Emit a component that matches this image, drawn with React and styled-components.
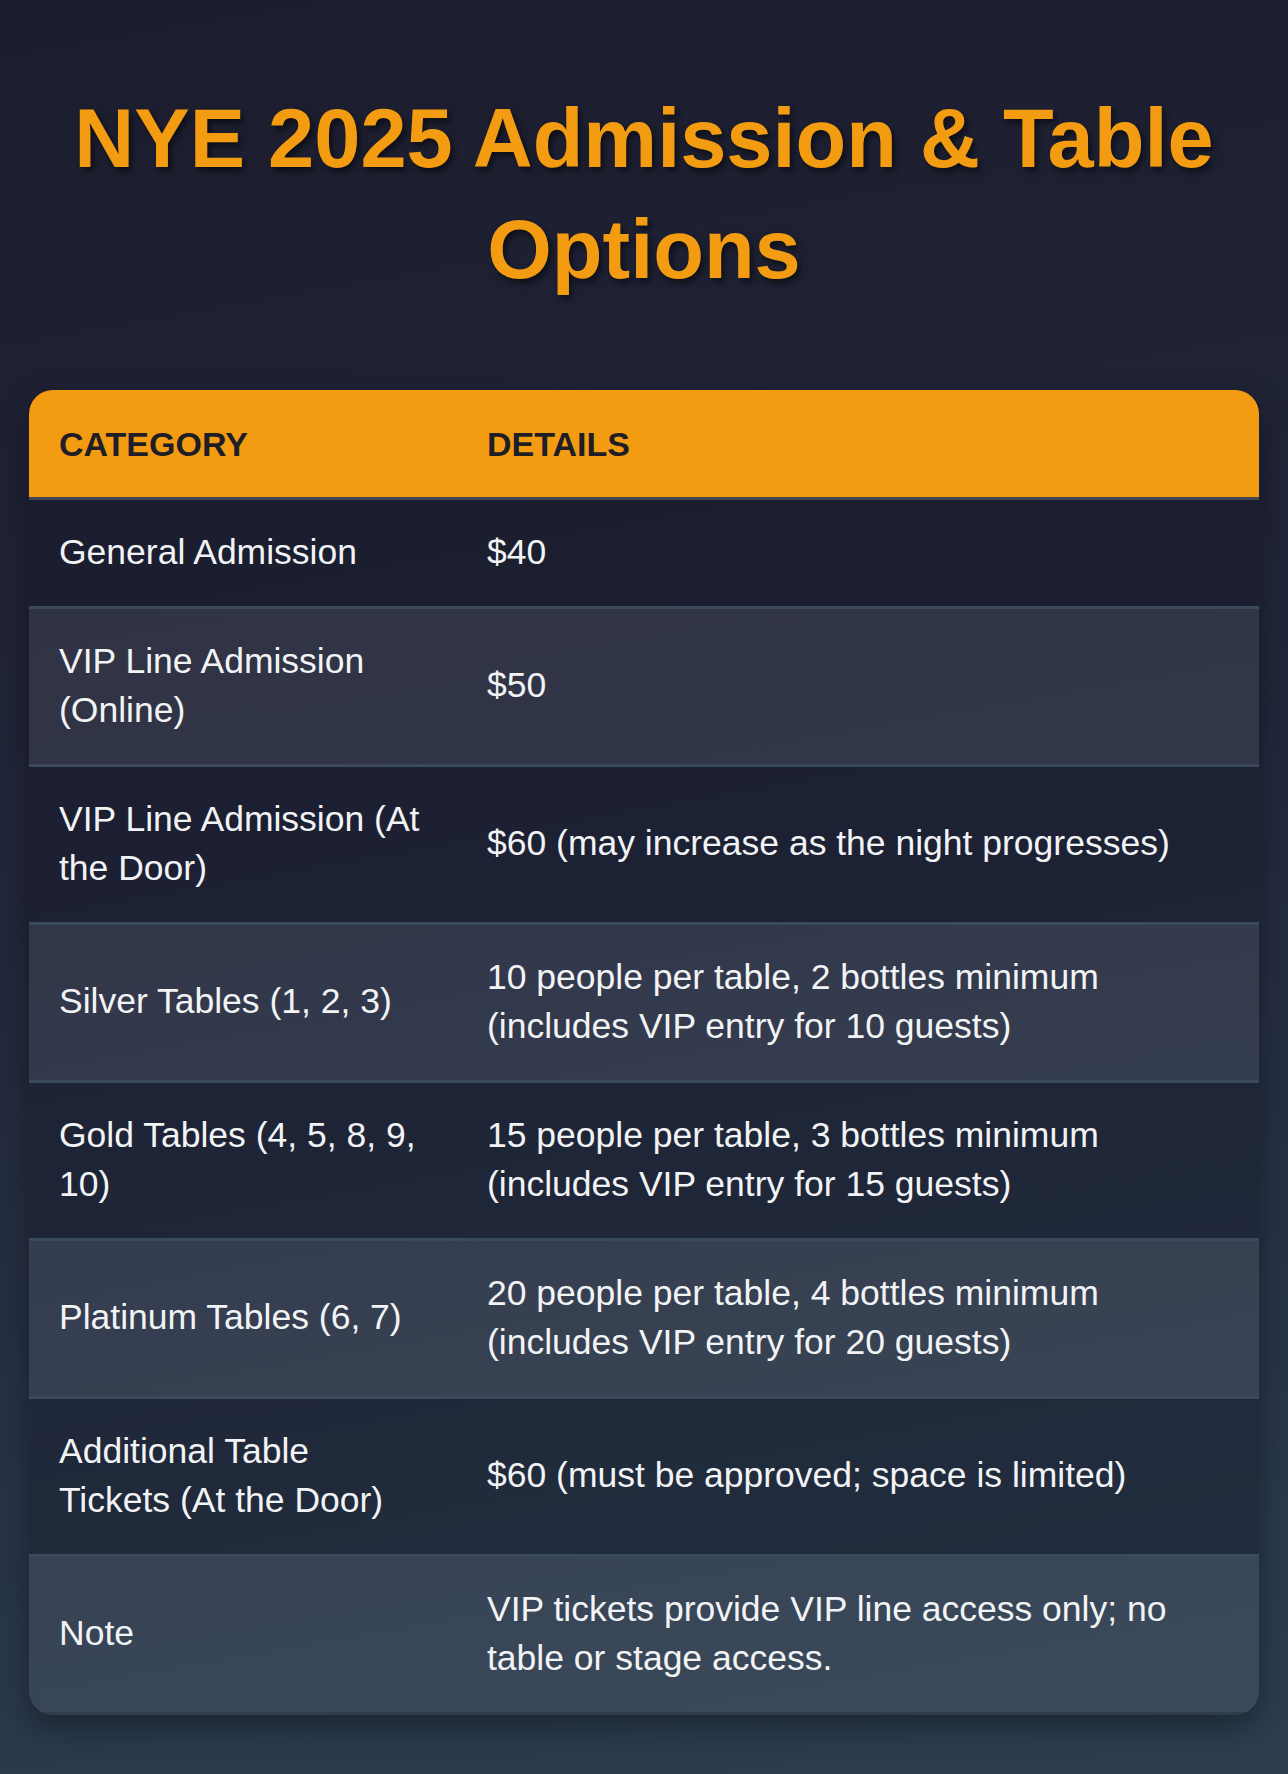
import React from "react";
import styled, { createGlobalStyle } from "styled-components";

const GlobalStyle = createGlobalStyle`
  html, body {
    margin: 0;
    padding: 0;
  }
  body {
    background: #1d1f2f;
    font-family: "Liberation Sans", Arial, Helvetica, sans-serif;
  }
`;

const Page = styled.div`
  min-height: 1774px;
  box-sizing: border-box;
  padding: 84px 29px 56px;
  background: linear-gradient(170deg, #1c1d2d 0%, #21263a 45%, #2c3e50 100%);
`;

const Title = styled.h1`
  margin: 0 0 85px;
  text-align: center;
  font-size: 83px;
  line-height: 110.5px;
  font-weight: 700;
  color: #f39c12;
  text-shadow: 3px 4px 6px rgba(0, 0, 0, 0.55);
`;

const Table = styled.div`
  border-radius: 24px;
  overflow: hidden;
  box-shadow: 0 12px 30px rgba(0, 0, 0, 0.35);
`;

const Row = styled.div`
  display: grid;
  grid-template-columns: 428px 1fr;
  align-items: center;
  border-bottom: 3px solid ${(p) => (p.$head ? "#3f4752" : "#3a4a5c")};
  background: ${(p) =>
    p.$head
      ? "#f39c12"
      : p.$alt
      ? "rgba(255, 255, 255, 0.075)"
      : "rgba(18, 20, 34, 0.3)"};
  &:last-child {
    border-bottom-color: #2f3c4c;
  }
`;

const Cell = styled.div`
  padding: 28px 30px;
  font-size: 35.5px;
  line-height: 49.5px;
  color: #f2f3f5;
`;

const HeadCell = styled.div`
  padding: 29.5px 30px;
  font-size: 34px;
  line-height: 48px;
  font-weight: 700;
  text-transform: uppercase;
  color: #1f1e26;
`;

const rows = [
  ["General Admission", "$40"],
  ["VIP Line Admission (Online)", "$50"],
  ["VIP Line Admission (At the Door)", "$60 (may increase as the night progresses)"],
  ["Silver Tables (1, 2, 3)", "10 people per table, 2 bottles minimum (includes VIP entry for 10 guests)"],
  ["Gold Tables (4, 5, 8, 9, 10)", "15 people per table, 3 bottles minimum (includes VIP entry for 15 guests)"],
  ["Platinum Tables (6, 7)", "20 people per table, 4 bottles minimum (includes VIP entry for 20 guests)"],
  ["Additional Table Tickets (At the Door)", "$60 (must be approved; space is limited)"],
  ["Note", "VIP tickets provide VIP line access only; no table or stage access."],
];

const App = () => {
  return (
    <>
      <GlobalStyle />
      <Page>
        <Title>NYE 2025 Admission &amp; Table Options</Title>
        <Table>
          <Row $head>
            <HeadCell>Category</HeadCell>
            <HeadCell>Details</HeadCell>
          </Row>
          {rows.map(([cat, det], i) => (
            <Row key={cat} $alt={i % 2 === 1}>
              <Cell>{cat}</Cell>
              <Cell>{det}</Cell>
            </Row>
          ))}
        </Table>
      </Page>
    </>
  );
};

export default App;
